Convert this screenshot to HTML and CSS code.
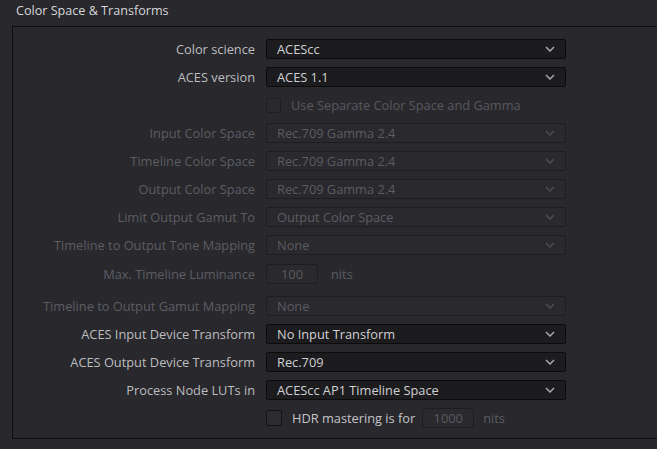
FILE: index.html
```html
<!DOCTYPE html>
<html>
<head>
<meta charset="utf-8">
<link rel="stylesheet" href="styles.css">
</head>
<body>
<div class="title">Color Space &amp; Transforms</div>
<div class="panel">
  <div class="row">
    <div class="label">Color science</div>
    <div class="select"><span>ACEScc</span><svg class="chev" viewBox="0 0 10 6"><path d="M1 1 L5 5 L9 1"/></svg></div>
  </div>
  <div class="row">
    <div class="label">ACES version</div>
    <div class="select"><span>ACES 1.1</span><svg class="chev" viewBox="0 0 10 6"><path d="M1 1 L5 5 L9 1"/></svg></div>
  </div>
  <div class="row">
    <div class="label"></div>
    <div class="check-line dis"><span class="cb"></span><span>Use Separate Color Space and Gamma</span></div>
  </div>
  <div class="row dis">
    <div class="label">Input Color Space</div>
    <div class="select"><span>Rec.709 Gamma 2.4</span><svg class="chev" viewBox="0 0 10 6"><path d="M1 1 L5 5 L9 1"/></svg></div>
  </div>
  <div class="row dis">
    <div class="label">Timeline Color Space</div>
    <div class="select"><span>Rec.709 Gamma 2.4</span><svg class="chev" viewBox="0 0 10 6"><path d="M1 1 L5 5 L9 1"/></svg></div>
  </div>
  <div class="row dis">
    <div class="label">Output Color Space</div>
    <div class="select"><span>Rec.709 Gamma 2.4</span><svg class="chev" viewBox="0 0 10 6"><path d="M1 1 L5 5 L9 1"/></svg></div>
  </div>
  <div class="row dis">
    <div class="label">Limit Output Gamut To</div>
    <div class="select"><span>Output Color Space</span><svg class="chev" viewBox="0 0 10 6"><path d="M1 1 L5 5 L9 1"/></svg></div>
  </div>
  <div class="row dis">
    <div class="label">Timeline to Output Tone Mapping</div>
    <div class="select"><span>None</span><svg class="chev" viewBox="0 0 10 6"><path d="M1 1 L5 5 L9 1"/></svg></div>
  </div>
  <div class="row dis lum">
    <div class="label">Max. Timeline Luminance</div>
    <div class="inline"><span class="num">100</span><span class="unit">nits</span></div>
  </div>
  <div class="row dis">
    <div class="label">Timeline to Output Gamut Mapping</div>
    <div class="select"><span>None</span><svg class="chev" viewBox="0 0 10 6"><path d="M1 1 L5 5 L9 1"/></svg></div>
  </div>
  <div class="row">
    <div class="label">ACES Input Device Transform</div>
    <div class="select"><span>No Input Transform</span><svg class="chev" viewBox="0 0 10 6"><path d="M1 1 L5 5 L9 1"/></svg></div>
  </div>
  <div class="row">
    <div class="label">ACES Output Device Transform</div>
    <div class="select"><span>Rec.709</span><svg class="chev" viewBox="0 0 10 6"><path d="M1 1 L5 5 L9 1"/></svg></div>
  </div>
  <div class="row">
    <div class="label">Process Node LUTs in</div>
    <div class="select"><span>ACEScc AP1 Timeline Space</span><svg class="chev" viewBox="0 0 10 6"><path d="M1 1 L5 5 L9 1"/></svg></div>
  </div>
  <div class="row">
    <div class="label"></div>
    <div class="check-line hdr"><span class="cb"></span><span>HDR mastering is for</span><span class="num">1000</span><span class="unit">nits</span></div>
  </div>
</div>
</body>
</html>
```

FILE: styles.css
```css
html, body {
  margin: 0;
  padding: 0;
  background: #28282d;
  font-family: "Open Sans", "Noto Sans", sans-serif;
  font-size: 12.8px;
  color: #bdbdbf;
  overflow: hidden;
}
.title {
  height: 26px;
  padding-left: 16px;
  line-height: 22px;
  font-size: 12.6px;
  color: #d6d6d8;
}
.panel {
  margin-left: 12px;
  width: calc(100% - 12px);
  height: 413px;
  border: 1px solid #0e0e10;
  border-right: none;
  padding-top: 12px;
  box-sizing: border-box;
  display: flex;
  flex-direction: column;
  gap: 8px;
}
.row {
  display: flex;
  align-items: center;
  height: 20px;
  gap: 11px;
}
.row.lum {
  margin-top: 1px;
  margin-bottom: 4px;
}
.label {
  width: 242px;
  flex: none;
  text-align: right;
  white-space: nowrap;
}
.select {
  width: 300px;
  height: 20px;
  box-sizing: border-box;
  border: 1px solid #0c0c0d;
  border-radius: 2px;
  background: #1c1c1f;
  color: #d0d0d2;
  display: flex;
  align-items: center;
  justify-content: space-between;
  padding: 0 10px 0 10px;
}
.chev {
  width: 10px;
  height: 6px;
  fill: none;
  stroke: #a8a8ac;
  stroke-width: 1.5;
}
.dis .label { color: #5d5d62; }
.dis .select {
  background: #29292e;
  border-color: #1e1e22;
  color: #5c5c61;
}
.dis .chev { stroke: #4c4c52; }
.check-line {
  display: flex;
  align-items: center;
  gap: 10px;
  white-space: nowrap;
}
.check-line.dis { color: #58585d; }
.cb {
  width: 15px;
  height: 15px;
  box-sizing: border-box;
  border: 1px solid #1f1f23;
  border-radius: 2px;
  background: #29292e;
  flex: none;
}
.hdr .cb {
  width: 16px;
  height: 16px;
  border-color: #141416;
  background: #2c2c31;
}
.hdr { color: #c4c4c6; }
.inline {
  display: flex;
  align-items: center;
  gap: 13px;
}
.num {
  width: 52px;
  height: 20px;
  box-sizing: border-box;
  border: 1px solid #1e1e22;
  border-radius: 2px;
  background: #29292e;
  color: #5c5c61;
  text-align: center;
  line-height: 18px;
}
.dis .unit { color: #5c5c61; }
.hdr .num { margin-left: -3px; }
.hdr .unit { color: #5c5c61; margin-left: -1px; }
```
